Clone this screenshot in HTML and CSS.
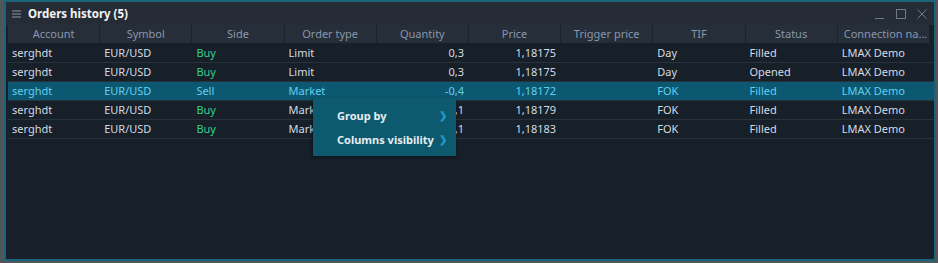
FILE: index.html
```html
<!DOCTYPE html>
<html lang="en">
<head>
    <meta charset="UTF-8">
    <title>Orders history</title>
    <link rel="stylesheet" href="styles.css">
</head>
<body>

<div class="panel">
    <div class="panel-head">
        <svg class="menu-icon" width="9" height="8" viewBox="0 0 9 8">
            <path d="M0 1H9M0 4H9M0 7H9" stroke="#8a97a6" stroke-width="1"/>
        </svg>
        <span class="panel-title">Orders history (5)</span>
        <div class="win-btns">
            <svg width="10" height="10" viewBox="0 0 10 10"><path d="M0 9.5H9" stroke="#6e7a88"/></svg>
            <svg width="10" height="10" viewBox="0 0 10 10"><rect x="0.5" y="0.5" width="9" height="9" fill="none" stroke="#6e7a88"/></svg>
            <svg width="10" height="10" viewBox="0 0 10 10"><path d="M0.5 0.5L9.5 9.5M9.5 0.5L0.5 9.5" stroke="#6e7a88"/></svg>
        </div>
    </div>

    <div class="grid">
        <div class="hrow">
            <div>Account</div>
            <div>Symbol</div>
            <div>Side</div>
            <div>Order type</div>
            <div>Quantity</div>
            <div>Price</div>
            <div>Trigger price</div>
            <div>TIF</div>
            <div>Status</div>
            <div class="trunc">Connection na...</div>
        </div>

        <div class="row">
            <div>serghdt</div><div>EUR/USD</div><div class="buy">Buy</div><div>Limit</div>
            <div class="num">0,3</div><div class="num">1,18175</div><div></div>
            <div>Day</div><div>Filled</div><div>LMAX Demo</div>
        </div>
        <div class="row">
            <div>serghdt</div><div>EUR/USD</div><div class="buy">Buy</div><div>Limit</div>
            <div class="num">0,3</div><div class="num">1,18175</div><div></div>
            <div>Day</div><div>Opened</div><div>LMAX Demo</div>
        </div>
        <div class="row selected">
            <div>serghdt</div><div>EUR/USD</div><div>Sell</div><div>Market</div>
            <div class="num">-0,4</div><div class="num">1,18172</div><div></div>
            <div>FOK</div><div>Filled</div><div>LMAX Demo</div>
        </div>
        <div class="row">
            <div>serghdt</div><div>EUR/USD</div><div class="buy">Buy</div><div>Market</div>
            <div class="num">0,1</div><div class="num">1,18179</div><div></div>
            <div>FOK</div><div>Filled</div><div>LMAX Demo</div>
        </div>
        <div class="row">
            <div>serghdt</div><div>EUR/USD</div><div class="buy">Buy</div><div>Market</div>
            <div class="num">0,1</div><div class="num">1,18183</div><div></div>
            <div>FOK</div><div>Filled</div><div>LMAX Demo</div>
        </div>
    </div>

    <div class="ctx-menu">
        <div class="ctx-item">Group by <span class="chev">&#x276F;</span></div>
        <div class="ctx-item">Columns visibility <span class="chev">&#x276F;</span></div>
    </div>
</div>

</body>
</html>
```

FILE: styles.css
```css
body {
    margin: 0;
    padding: 0 2px 2px 4px;
    background-color: #4f5559;
    font-family: "Noto Sans", "Open Sans", sans-serif;
    font-size: 11px;
    color: #d4dbe2;
    width: 932px;
    height: 261px;
}
.panel {
    position: relative;
    box-sizing: border-box;
    width: 932px;
    height: 261px;
    border: 2px solid #19637b;
    background-color: #171f29;
}
.panel-head {
    display: flex;
    align-items: center;
    height: 23px;
    padding-left: 6px;
    background-color: #262c35;
}
.menu-icon {
    margin-right: 7px;
}
.panel-title {
    font-weight: bold;
    font-size: 11.5px;
    color: #f2f4f6;
}
.win-btns {
    margin-left: auto;
    display: flex;
    gap: 11px;
    padding-right: 7px;
    padding-top: 1px;
}
.grid {
    padding: 0 0 0 2px;
}
.hrow, .row {
    display: grid;
    grid-template-columns: repeat(10, 92.2px);
}
.hrow {
    height: 18px;
    margin-bottom: 1px;
}
.hrow div {
    background-color: #262e39;
    color: #8898ad;
    text-align: center;
    line-height: 18px;
    border-right: 1px solid #1b222b;
    white-space: nowrap;
}
.hrow .trunc {
    text-align: left;
    padding-left: 6px;
}
.row {
    height: 18px;
    border-bottom: 1px solid #29313c;
}
.row div {
    line-height: 18px;
    padding-left: 4px;
    white-space: nowrap;
}
.row .num {
    text-align: right;
    padding-right: 5px;
}
.buy {
    color: #37cf8c;
}
.row.selected {
    background-color: #0c5870;
    color: #62cff0;
}
.ctx-menu {
    position: absolute;
    left: 307px;
    top: 96px;
    width: 143px;
    padding: 5px 0;
    background-color: #0d5a6f;
    box-shadow: -1px 1px 3px rgba(0, 0, 0, 0.45);
}
.ctx-item {
    display: flex;
    align-items: center;
    height: 24px;
    padding-left: 24px;
    padding-right: 9px;
    font-weight: bold;
    color: #e6edf1;
    white-space: nowrap;
}
.chev {
    margin-left: auto;
    color: #1c9bcc;
    font-size: 10px;
}
```
